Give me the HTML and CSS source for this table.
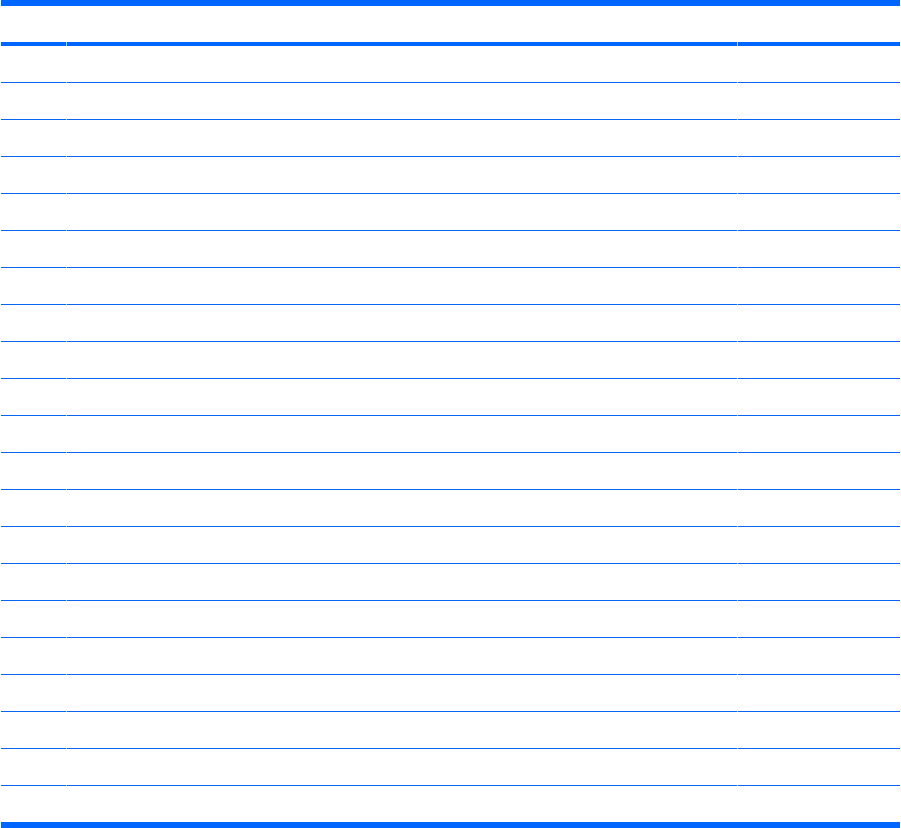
FILE: index.html
```html
<!DOCTYPE html>
<html lang="en">
<head>
    <meta charset="UTF-8">
    <meta name="viewport" content="width=device-width, initial-scale=1.0">
    <title>Table</title>
    <link rel="stylesheet" href="styles.css">
</head>
<body>

    <div class="sheet">
        <div class="row head">
            <div class="cell c1"></div><div class="cell c2"></div><div class="cell c3"></div>
        </div>
        <div class="row"><div class="cell c1"></div><div class="cell c2"></div><div class="cell c3"></div></div>
        <div class="row"><div class="cell c1"></div><div class="cell c2"></div><div class="cell c3"></div></div>
        <div class="row"><div class="cell c1"></div><div class="cell c2"></div><div class="cell c3"></div></div>
        <div class="row"><div class="cell c1"></div><div class="cell c2"></div><div class="cell c3"></div></div>
        <div class="row"><div class="cell c1"></div><div class="cell c2"></div><div class="cell c3"></div></div>
        <div class="row"><div class="cell c1"></div><div class="cell c2"></div><div class="cell c3"></div></div>
        <div class="row"><div class="cell c1"></div><div class="cell c2"></div><div class="cell c3"></div></div>
        <div class="row"><div class="cell c1"></div><div class="cell c2"></div><div class="cell c3"></div></div>
        <div class="row"><div class="cell c1"></div><div class="cell c2"></div><div class="cell c3"></div></div>
        <div class="row"><div class="cell c1"></div><div class="cell c2"></div><div class="cell c3"></div></div>
        <div class="row"><div class="cell c1"></div><div class="cell c2"></div><div class="cell c3"></div></div>
        <div class="row"><div class="cell c1"></div><div class="cell c2"></div><div class="cell c3"></div></div>
        <div class="row"><div class="cell c1"></div><div class="cell c2"></div><div class="cell c3"></div></div>
        <div class="row"><div class="cell c1"></div><div class="cell c2"></div><div class="cell c3"></div></div>
        <div class="row"><div class="cell c1"></div><div class="cell c2"></div><div class="cell c3"></div></div>
        <div class="row"><div class="cell c1"></div><div class="cell c2"></div><div class="cell c3"></div></div>
        <div class="row"><div class="cell c1"></div><div class="cell c2"></div><div class="cell c3"></div></div>
        <div class="row"><div class="cell c1"></div><div class="cell c2"></div><div class="cell c3"></div></div>
        <div class="row"><div class="cell c1"></div><div class="cell c2"></div><div class="cell c3"></div></div>
        <div class="row"><div class="cell c1"></div><div class="cell c2"></div><div class="cell c3"></div></div>
        <div class="row last"><div class="cell c1"></div><div class="cell c2"></div><div class="cell c3"></div></div>
    </div>

</body>
</html>
```

FILE: styles.css
```css
:root {
    --bar-color: #0066ff;
    --line-color: #0a66f2;
    --gap-color: #a9c8ff;
}

body {
    margin: 0;
    padding: 0;
    background-color: #fff;
    font-family: 'Liberation Sans', Arial, sans-serif;
}

.sheet {
    width: 899px;
    margin-left: 1px;
    border-top: 6px solid var(--bar-color);
    border-bottom: 6px solid var(--bar-color);
}

.row {
    display: flex;
    gap: 1px;
    background: linear-gradient(to top, var(--gap-color) 1px, transparent 1px);
}

.cell {
    height: 36px;
    border-bottom: 1px solid var(--line-color);
    background-color: #fff;
}

.c1 {
    width: 65px;
}

.c2 {
    width: 670px;
}

.c3 {
    width: 162px;
}

.head {
    background: linear-gradient(to top, var(--gap-color) 4px, transparent 4px);
}

.head .cell {
    border-bottom: 4px solid var(--bar-color);
}

.last {
    background: none;
}

.last .cell {
    border-bottom: none;
}
```
